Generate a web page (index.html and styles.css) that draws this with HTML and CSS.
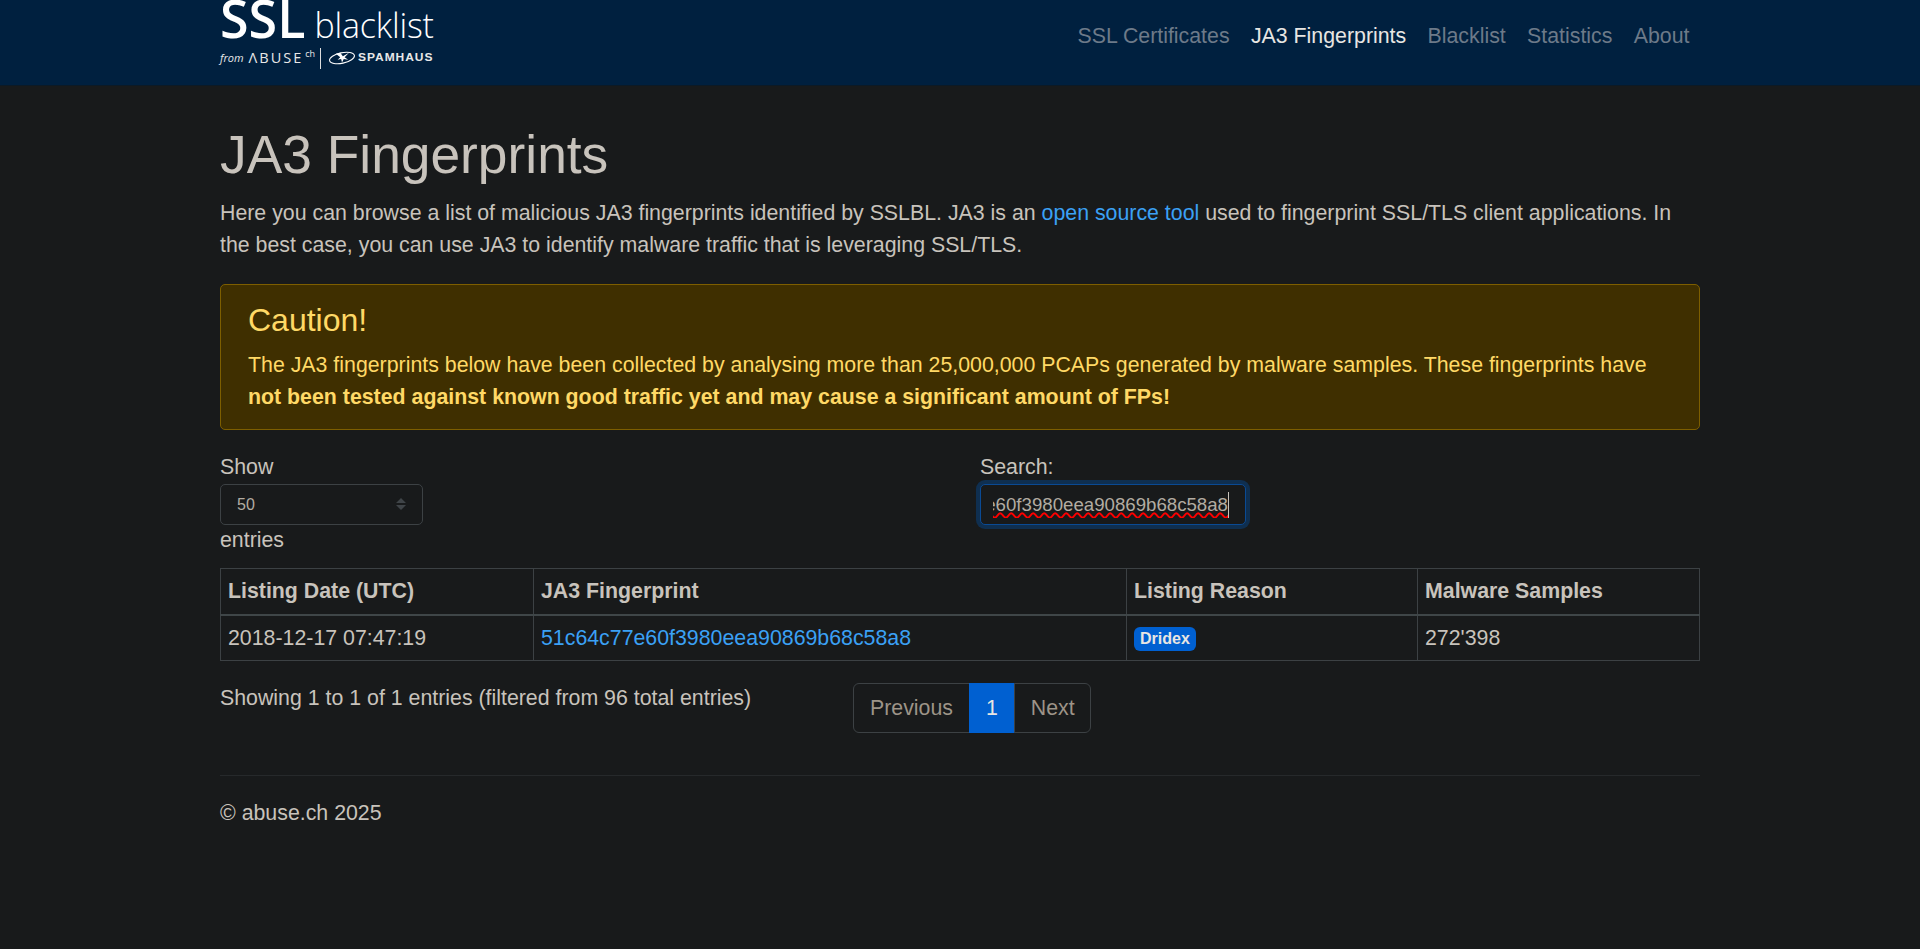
FILE: index.html
```html
<!DOCTYPE html>
<html lang="en">
<head>
    <meta charset="utf-8">
    <title>SSLBL | JA3 Fingerprints</title>
    <link rel="stylesheet" href="styles.css">
</head>
<body>
    <nav class="navbar">
        <div class="navbar-inner">
            <a class="brand" href="#">
                <div class="brand-top"><span class="brand-ssl">SSL</span><span class="brand-blacklist">blacklist</span></div>
                <div class="brand-bottom">
                    <span class="brand-from">from</span>
                    <span class="brand-abuse">ΛBUSE</span><span class="brand-ch">ch</span>
                    <span class="brand-divider"></span>
                    <svg class="brand-icon" viewBox="0 0 32 16" width="28" height="14">
                        <ellipse cx="16" cy="8" rx="14.5" ry="6" fill="none" stroke="#fff" stroke-width="1.2" transform="rotate(-12 16 8)"/>
                        <path d="M9 3 L14 7 L11 10 L15 9 L16 13 L18 9 L23 10 L19 7 L24 2 L17 6 L14 2 Z" fill="#fff"/>
                    </svg>
                    <span class="brand-spamhaus">SPAMHAUS</span>
                </div>
            </a>
            <ul class="nav">
                <li><a href="#">SSL Certificates</a></li>
                <li><a class="active" href="#">JA3 Fingerprints</a></li>
                <li><a href="#">Blacklist</a></li>
                <li><a href="#">Statistics</a></li>
                <li><a href="#">About</a></li>
            </ul>
        </div>
    </nav>

    <main class="container">
        <h1>JA3 Fingerprints</h1>
        <p class="intro">Here you can browse a list of malicious JA3 fingerprints identified by SSLBL. JA3 is an <a href="#">open source tool</a> used to fingerprint SSL/TLS client applications. In the best case, you can use JA3 to identify malware traffic that is leveraging SSL/TLS.</p>

        <div class="alert">
            <h4>Caution!</h4>
            <p>The JA3 fingerprints below have been collected by analysing more than 25,000,000 PCAPs generated by malware samples. These fingerprints have <strong>not been tested against known good traffic yet and may cause a significant amount of FPs!</strong></p>
        </div>

        <div class="table-top">
            <div class="length-col">
                <div>Show</div>
                <div class="select-wrap">
                    <select class="length-select"><option>50</option></select>
                    <svg class="select-arrows" viewBox="0 0 12 14" width="12" height="14">
                        <path d="M6 1 L11 6 L1 6 Z M6 13 L11 8 L1 8 Z" fill="#3f4448"/>
                    </svg>
                </div>
                <div>entries</div>
            </div>
            <div class="search-col">
                <div>Search:</div>
                <div class="search-box">
                    <div class="search-clip"><span class="search-value">51c64c77e60f3980eea90869b68c58a8</span></div>
                </div>
            </div>
        </div>

        <table class="data-table">
            <thead>
                <tr>
                    <th class="col-date">Listing Date (UTC)</th>
                    <th class="col-fp">JA3 Fingerprint</th>
                    <th class="col-reason">Listing Reason</th>
                    <th>Malware Samples</th>
                </tr>
            </thead>
            <tbody>
                <tr>
                    <td>2018-12-17 07:47:19</td>
                    <td><a href="#">51c64c77e60f3980eea90869b68c58a8</a></td>
                    <td><span class="badge">Dridex</span></td>
                    <td>272'398</td>
                </tr>
            </tbody>
        </table>

        <div class="table-bottom">
            <div class="info">Showing 1 to 1 of 1 entries (filtered from 96 total entries)</div>
            <ul class="pagination">
                <li><a href="#">Previous</a></li>
                <li><a class="current" href="#">1</a></li>
                <li><a href="#">Next</a></li>
            </ul>
        </div>

        <footer class="footer">© abuse.ch 2025</footer>
    </main>
</body>
</html>
```

FILE: styles.css
```css
* {
    box-sizing: border-box;
}

body {
    margin: 0;
    min-height: 949px;
    background-color: #181a1b;
    color: #c8c3bc;
    font-family: "Liberation Sans", Arial, sans-serif;
    font-size: 21.33px;
    line-height: 32px;
}

a {
    color: #3ba1f5;
    text-decoration: none;
}

.navbar {
    height: 86px;
    background-color: #00203f;
    border-bottom: 1px solid #0c1a26;
}

.navbar-inner {
    width: 1480px;
    margin: 0 auto;
    display: flex;
    justify-content: space-between;
}

.brand {
    display: block;
    color: #fff;
    font-family: "Open Sans", sans-serif;
}

.brand-top {
    display: flex;
    align-items: baseline;
    height: 46px;
    line-height: 36px;
}

.brand-ssl {
    font-size: 52px;
    font-weight: 600;
    margin-right: 9px;
}

.brand-blacklist {
    font-size: 34px;
    font-weight: 300;
    letter-spacing: -0.2px;
}

.brand-bottom {
    display: flex;
    align-items: center;
    height: 24px;
    line-height: 24px;
    color: #e8e8e8;
}

.brand-from {
    font-size: 11px;
    font-style: italic;
    margin-right: 5px;
}

.brand-abuse {
    font-size: 14.5px;
    letter-spacing: 2px;
}

.brand-ch {
    font-size: 9px;
    margin: -8px 0 0 2px;
}

.brand-divider {
    width: 1px;
    height: 21px;
    background-color: #ddd;
    margin: 0 7px 0 5px;
}

.brand-icon {
    margin-right: 2px;
    flex: none;
}

.brand-spamhaus {
    font-family: "Liberation Sans", sans-serif;
    font-size: 10px;
    font-weight: 700;
    letter-spacing: 0.8px;
    transform: scaleX(1.2);
    transform-origin: left center;
}

.nav {
    list-style: none;
    margin: 0;
    padding: 20px 0 0;
    display: flex;
    gap: 21.33px;
    margin-right: 10.5px;
}

.nav a {
    color: #6d7a89;
}

.nav a.active {
    color: #e8e6e3;
}

.container {
    width: 1480px;
    margin: 0 auto;
}

h1 {
    margin: 0;
    padding-top: 38px;
    font-size: 53.33px;
    font-weight: 400;
    line-height: 62px;
}

.intro {
    margin: 11px 0 0;
}

.alert {
    margin-top: 23px;
    padding: 15px 27px 15px;
    height: 146px;
    background-color: #3f2f00;
    border: 1px solid #7d5e00;
    border-radius: 5px;
    color: #ffd966;
}

.alert h4 {
    margin: 0;
    font-size: 32px;
    font-weight: 400;
    line-height: 40px;
}

.alert p {
    margin: 9px 0 0;
}

.table-top {
    display: grid;
    grid-template-columns: 1fr 1fr;
    gap: 40px;
    margin-top: 21px;
}

.select-wrap {
    position: relative;
    width: 203px;
    margin-top: 1px;
    margin-bottom: -1px;
}

.length-select {
    display: block;
    width: 100%;
    height: 41px;
    padding: 0 16px;
    appearance: none;
    background-color: #181a1b;
    border: 1px solid #3c4144;
    border-radius: 5px;
    color: #b2aca2;
    font-family: "Liberation Sans", sans-serif;
    font-size: 16px;
}

.select-arrows {
    position: absolute;
    right: 16px;
    top: 13px;
    pointer-events: none;
}

.search-box {
    width: 266px;
    height: 41px;
    margin-top: 1px;
    padding: 0 16px 0 12px;
    display: flex;
    align-items: center;
    background-color: #181a1b;
    border: 1px solid #0a4a94;
    border-radius: 5px;
    box-shadow: 0 0 0 4px #0f2f50;
    color: #b2aca2;
    font-size: 18.67px;
}

.search-clip {
    width: 100%;
    display: flex;
    justify-content: flex-end;
    overflow: hidden;
}

.search-value {
    flex: none;
    line-height: 26px;
    text-decoration: underline wavy #ff0000 1.5px;
    border-right: 1px solid #c8c3bc;
}

.data-table {
    width: 1480px;
    margin-top: 12px;
    border-collapse: collapse;
    table-layout: fixed;
}

.data-table th,
.data-table td {
    padding: 6px 7px;
    border: 1px solid #3c4144;
    text-align: left;
    vertical-align: middle;
}

.data-table th {
    padding-top: 6px;
    padding-bottom: 7px;
    border-bottom: 2px solid #3f4648;
    font-weight: 700;
}

.col-date {
    width: 313px;
}

.col-fp {
    width: 593px;
}

.col-reason {
    width: 291px;
}

.badge {
    display: inline-block;
    padding: 0 6px;
    height: 24px;
    line-height: 24px;
    vertical-align: middle;
    background-color: #0060d1;
    border-radius: 6px;
    color: #e8e6e3;
    font-size: 16px;
    font-weight: 700;
}

.table-bottom {
    display: grid;
    grid-template-columns: 593px 1fr;
    gap: 40px;
    margin-top: 22px;
}

.info {
    margin-top: -1px;
}

.pagination {
    list-style: none;
    display: inline-flex;
    justify-self: start;
    margin: 0;
    padding: 0;
    height: 50px;
}

.pagination a {
    display: block;
    height: 50px;
    padding: 8px 16px;
    line-height: 32px;
    color: #9d9488;
    background-color: #181a1b;
    border: 1px solid #3c4144;
}

.pagination li + li a {
    margin-left: -1px;
}

.pagination li:first-child a {
    border-radius: 6px 0 0 6px;
}

.pagination li:last-child a {
    padding-right: 15px;
    border-radius: 0 6px 6px 0;
}

.pagination a.current {
    color: #e8e6e3;
    background-color: #0060d1;
    border-color: #0060d1;
}

.footer {
    margin-top: 42px;
    padding-top: 21px;
    border-top: 1px solid #26292b;
}
```
